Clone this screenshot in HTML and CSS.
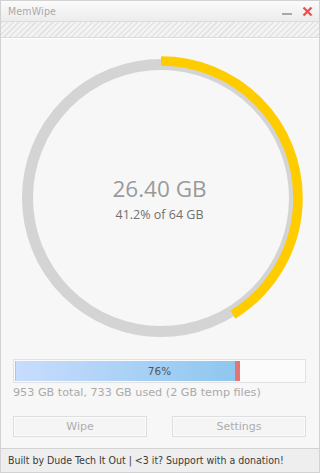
FILE: index.html
```html
<!DOCTYPE html>
<html>
<head>
<meta charset="utf-8">
<link rel="stylesheet" href="styles.css">
</head>
<body>
<div class="window">
  <div class="titlebar">
    <span class="title">MemWipe</span>
    <span class="controls">
      <svg class="min" width="10" height="4" viewBox="0 0 10 4"><rect x="0" y="1" width="10" height="2" fill="#a8a8a8"/></svg>
      <svg class="close" width="11" height="11" viewBox="0 0 11 11"><path d="M1.5 1.5 L9.5 9.5 M9.5 1.5 L1.5 9.5" stroke="#f05050" stroke-width="2.4" fill="none"/></svg>
    </span>
  </div>
  <div class="stripes"></div>
  <div class="content">
    <div class="gauge">
      <svg class="ring" width="290" height="290" viewBox="0 0 290 290">
        <circle cx="145" cy="145" r="133.5" fill="none" stroke="#d4d4d4" stroke-width="11"/>
        <circle cx="145" cy="145" r="137" fill="none" stroke="#ffcc00" stroke-width="9.5" stroke-dasharray="354.6 1000" transform="rotate(-90 145 145)"/>
      </svg>
      <div class="readout">
        <div class="big">26.40 GB</div>
        <div class="small">41.2% of 64 GB</div>
      </div>
    </div>
    <div class="disk">
      <div class="bar">
        <div class="fill" style="width:76%"></div>
        <div class="temp"></div>
        <span class="pct">76%</span>
      </div>
      <div class="diskinfo">953 GB total, 733 GB used (2 GB temp files)</div>
    </div>
    <div class="buttons">
      <div class="btn">Wipe</div>
      <div class="btn">Settings</div>
    </div>
  </div>
  <div class="footer">Built by Dude Tech It Out | &lt;3 it? Support with a donation!</div>
</div>
</body>
</html>
```
FILE: styles.css
```css
html, body {
  margin: 0;
  padding: 0;
  background: #f7f7f7;
}
.window {
  width: 320px;
  height: 473px;
  box-sizing: border-box;
  border: 1px solid #d2d2d2;
  display: flex;
  flex-direction: column;
  font-family: "DejaVu Sans Condensed", "DejaVu Sans", sans-serif;
  background: #f7f7f7;
}
.titlebar {
  height: 20px;
  display: flex;
  align-items: center;
  justify-content: space-between;
  padding: 0 6px 0 7px;
  background: linear-gradient(#fbfbfb, #ececec);
  border-bottom: 1px solid #dcdcdc;
}
.title {
  font-size: 10.5px;
  color: #a9a9a9;
  letter-spacing: 0.2px;
}
.controls {
  display: flex;
  align-items: center;
  gap: 10px;
}
.min { margin-top: 6px; }
.stripes {
  height: 15px;
  background: repeating-linear-gradient(135deg, #e4e4e4 0 1.5px, #f3f3f3 1.5px 4px);
  border-bottom: 1px solid #dadada;
}
.content {
  flex: 1;
  display: flex;
  flex-direction: column;
  padding: 0 13px 0 12px;
  border-top: 1px solid #fff;
}
.gauge {
  position: relative;
  height: 290px;
  margin-top: 14px;
  display: flex;
  justify-content: center;
  align-items: center;
}
.ring {
  position: absolute;
  left: 3px;
  top: 0;
}
.readout {
  text-align: center;
  margin-top: 1px;
}
.big {
  font-family: "Open Sans", sans-serif;
  font-size: 22.5px;
  color: #9a9a9a;
  line-height: 27px;
}
.small {
  font-family: "Open Sans", sans-serif;
  font-size: 12.5px;
  color: #707070;
  line-height: 16px;
  margin-top: 5px;
}
.disk {
  margin-top: 16px;
}
.bar {
  position: relative;
  height: 20px;
  border: 1px solid #e2e2e2;
  background: #fbfbfb;
  padding: 1px;
  display: flex;
}
.fill {
  height: 100%;
  background: linear-gradient(90deg, #c8dcfd, #8ec7ef);
  border-left: 1px solid #f0b0b0;
  box-sizing: border-box;
}
.temp {
  width: 5px;
  height: 100%;
  background: #e57575;
}
.pct {
  position: absolute;
  left: 0;
  right: 0;
  top: 0;
  bottom: 0;
  display: flex;
  align-items: center;
  justify-content: center;
  font-family: "DejaVu Sans", sans-serif;
  font-size: 10.5px;
  color: #555;
}
.diskinfo {
  margin-top: 3px;
  font-family: "DejaVu Sans", sans-serif;
  font-size: 11.2px;
  line-height: 13px;
  color: #aaaaaa;
}
.buttons {
  margin-top: 17px;
  display: flex;
  justify-content: space-between;
}
.btn {
  width: 132px;
  height: 19px;
  border: 1px solid #dedede;
  box-shadow: inset 0 0 0 1px #fbfbfb;
  background: #f5f5f5;
  text-align: center;
  line-height: 19px;
  font-family: "DejaVu Sans", sans-serif;
  font-size: 11px;
  color: #adadad;
}
.footer {
  height: 23px;
  border-top: 1px solid #d2d2d2;
  background: #eeeeee;
  font-size: 10.5px;
  color: #3a3a3a;
  line-height: 23px;
  padding-left: 7px;
}
```
